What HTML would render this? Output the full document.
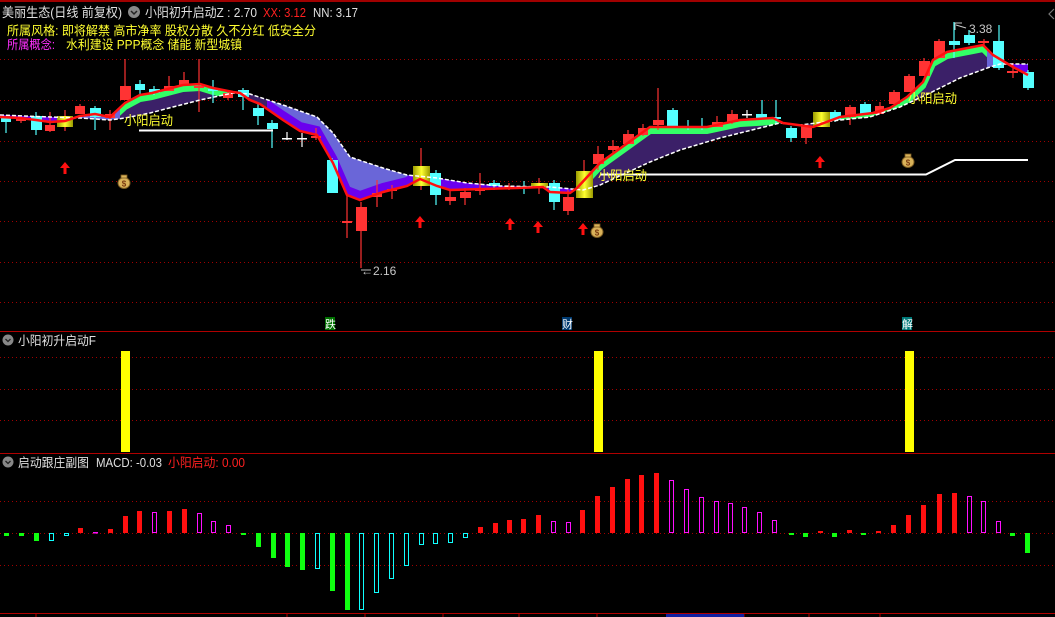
<!DOCTYPE html>
<html><head><meta charset="utf-8"><style>
html,body{margin:0;padding:0;background:#000;width:1055px;height:617px;overflow:hidden}
svg{display:block}
text{font-family:"Liberation Sans","Noto Sans CJK SC",sans-serif}
</style></head><body>
<svg width="1055" height="617" viewBox="0 0 1055 617" xmlns="http://www.w3.org/2000/svg">
<defs>
<clipPath id="rise"><rect x="120" y="0" width="147" height="330"/><rect x="575" y="0" width="412" height="330"/></clipPath>
<clipPath id="fall"><rect x="0" y="0" width="120" height="330"/><rect x="267" y="0" width="308" height="330"/><rect x="987" y="0" width="68" height="330"/></clipPath>
<clipPath id="band"><polygon id="bandp" points="0,117 20,118 36,120 50,122 65,121 80,116 95,114 110,117 125,103 140,95 152,93 183,85 200,84 213,88 233,92 240,93 250,100 260,104 283,120 300,131 317,135 333,163 347,195 360,200 383,192 407,186 420,179 437,186 450,190 483,189 517,188 543,187 550,192 570,193 577,188 600,163 650,127 660,127 707,127 740,120 773,118 783,123 813,127 840,117 873,113 890,108 907,97 923,82 933,60 947,52 973,47 983,45 993,55 1013,67 1028,75 1028,64 1000,64 990,67 960,78 930,93 900,107 870,117 840,120 800,125 780,123 760,128 720,138 680,150 650,162 600,185 583,190 550,187 500,186 467,183 437,178 407,175 383,168 350,157 333,133 317,117 283,105 250,94 233,93 200,100 150,113 125,118 110,120 80,118 50,117 0,115"/></clipPath>
<linearGradient id="yg" x1="0" x2="1" y1="0" y2="0"><stop offset="0" stop-color="#9a9a00"/><stop offset="0.5" stop-color="#ffff30"/><stop offset="1" stop-color="#9a9a00"/></linearGradient>
<g id="arrow"><polygon points="0,-6 -5,0 -1.5,0 -1.5,6 1.5,6 1.5,0 5,0" fill="#ff1010"/></g>
<g id="bag"><ellipse cx="0" cy="2" rx="6" ry="5.5" fill="#d9b25a" stroke="#7a5a20" stroke-width="1"/><rect x="-3" y="-6" width="6" height="3" fill="#d9b25a" stroke="#7a5a20" stroke-width="0.8"/><text x="0" y="5.5" font-size="8" fill="#7a3a10" text-anchor="middle" font-weight="bold">$</text></g>
</defs>

<line x1="0" y1="1" x2="1055" y2="1" stroke="#a00000" stroke-width="2"/>
<g stroke="#a00000" stroke-width="1" stroke-dasharray="1,3">
<line x1="0" y1="59.5" x2="1055" y2="59.5"/><line x1="0" y1="100.5" x2="1055" y2="100.5"/><line x1="0" y1="141.5" x2="1055" y2="141.5"/><line x1="0" y1="181.5" x2="1055" y2="181.5"/><line x1="0" y1="221.5" x2="1055" y2="221.5"/><line x1="0" y1="262.5" x2="1055" y2="262.5"/><line x1="0" y1="302.5" x2="1055" y2="302.5"/>
<line x1="0" y1="357.5" x2="1055" y2="357.5"/><line x1="0" y1="389.5" x2="1055" y2="389.5"/><line x1="0" y1="420.5" x2="1055" y2="420.5"/>
<line x1="0" y1="501.5" x2="1055" y2="501.5"/><line x1="0" y1="533.5" x2="1055" y2="533.5"/><line x1="0" y1="565.5" x2="1055" y2="565.5"/>
</g>
<line x1="0" y1="331.5" x2="1055" y2="331.5" stroke="#b00000"/>
<line x1="0" y1="453.5" x2="1055" y2="453.5" stroke="#b00000"/>
<line x1="0" y1="613.5" x2="1055" y2="613.5" stroke="#b00000"/>
<g stroke="#b00000"><line x1="36" y1="613" x2="36" y2="617"/><line x1="287" y1="613" x2="287" y2="617"/><line x1="365" y1="613" x2="365" y2="617"/><line x1="443" y1="613" x2="443" y2="617"/><line x1="519" y1="613" x2="519" y2="617"/><line x1="597" y1="613" x2="597" y2="617"/><line x1="744" y1="613" x2="744" y2="617"/><line x1="809" y1="613" x2="809" y2="617"/><line x1="880" y1="613" x2="880" y2="617"/></g>
<rect x="666" y="614" width="78" height="3" fill="#1020a0"/>

<g clip-path="url(#rise)"><use href="#bandp" fill="#3b2068"/></g>
<g clip-path="url(#fall)"><use href="#bandp" fill="#6a66d8"/></g>
<g clip-path="url(#band)">
 <g clip-path="url(#rise)"><polyline transform="translate(0,4)" fill="none" stroke="#33ff66" stroke-width="6" points="0,117 20,118 36,120 50,122 65,121 80,116 95,114 110,117 125,103 140,95 152,93 183,85 200,84 213,88 233,92 240,93 250,100 260,104 283,120 300,131 317,135 333,163 347,195 360,200 383,192 407,186 420,179 437,186 450,190 483,189 517,188 543,187 550,192 570,193 577,188 600,163 650,127 660,127 707,127 740,120 773,118 783,123 813,127 840,117 873,113 890,108 907,97 923,82 933,60 947,52 973,47 983,45 993,55 1013,67 1028,75"/></g>
 <g clip-path="url(#fall)"><polyline transform="translate(0,-5)" fill="none" stroke="#6a00ee" stroke-width="8" points="0,117 20,118 36,120 50,122 65,121 80,116 95,114 110,117 125,103 140,95 152,93 183,85 200,84 213,88 233,92 240,93 250,100 260,104 283,120 300,131 317,135 333,163 347,195 360,200 383,192 407,186 420,179 437,186 450,190 483,189 517,188 543,187 550,192 570,193 577,188 600,163 650,127 660,127 707,127 740,120 773,118 783,123 813,127 840,117 873,113 890,108 907,97 923,82 933,60 947,52 973,47 983,45 993,55 1013,67 1028,75"/></g>
</g>

<g id="candles">
<g stroke-width="1.2">
<line x1="6" y1="116" x2="6" y2="133" stroke="#54ffff"/><line x1="21" y1="117" x2="21" y2="123" stroke="#ff3333"/><line x1="36" y1="112" x2="36" y2="135" stroke="#54ffff"/><line x1="50" y1="112" x2="50" y2="132" stroke="#ff3333"/><line x1="65" y1="110" x2="65" y2="131" stroke="#ff3333"/><line x1="80" y1="104" x2="80" y2="114" stroke="#ff3333"/><line x1="95" y1="106" x2="95" y2="130" stroke="#54ffff"/><line x1="110" y1="110" x2="110" y2="130" stroke="#ff3333"/><line x1="125" y1="59" x2="125" y2="100" stroke="#ff3333"/><line x1="140" y1="80" x2="140" y2="95" stroke="#54ffff"/><line x1="154" y1="86" x2="154" y2="95" stroke="#54ffff"/><line x1="169" y1="76" x2="169" y2="91" stroke="#ff3333"/><line x1="184" y1="72" x2="184" y2="85" stroke="#ff3333"/><line x1="199" y1="59" x2="199" y2="112" stroke="#ff3333"/><line x1="213" y1="80" x2="213" y2="103" stroke="#54ffff"/><line x1="228" y1="90" x2="228" y2="100" stroke="#ff3333"/><line x1="243" y1="88" x2="243" y2="110" stroke="#54ffff"/><line x1="258" y1="104" x2="258" y2="125" stroke="#54ffff"/><line x1="272" y1="120" x2="272" y2="148" stroke="#54ffff"/><line x1="287" y1="132" x2="287" y2="140" stroke="#fff"/><line x1="302" y1="133" x2="302" y2="147" stroke="#fff"/><line x1="316" y1="128" x2="316" y2="140" stroke="#ff3333"/><line x1="332" y1="158" x2="332" y2="193" stroke="#54ffff"/><line x1="347" y1="195" x2="347" y2="238" stroke="#ff3333"/><line x1="361" y1="202" x2="361" y2="268" stroke="#ff3333"/><line x1="377" y1="180" x2="377" y2="207" stroke="#ff3333"/><line x1="392" y1="185" x2="392" y2="199" stroke="#ff3333"/><line x1="421" y1="148" x2="421" y2="190" stroke="#ff3333"/><line x1="436" y1="170" x2="436" y2="205" stroke="#54ffff"/><line x1="450" y1="190" x2="450" y2="205" stroke="#ff3333"/><line x1="465" y1="188" x2="465" y2="205" stroke="#ff3333"/><line x1="480" y1="173" x2="480" y2="195" stroke="#ff3333"/><line x1="494" y1="180" x2="494" y2="190" stroke="#54ffff"/><line x1="509" y1="183" x2="509" y2="190" stroke="#ff3333"/><line x1="524" y1="181" x2="524" y2="194" stroke="#54ffff"/><line x1="539" y1="178" x2="539" y2="194" stroke="#ff3333"/><line x1="554" y1="180" x2="554" y2="210" stroke="#54ffff"/><line x1="568" y1="190" x2="568" y2="215" stroke="#ff3333"/><line x1="584" y1="160" x2="584" y2="198" stroke="#ff3333"/><line x1="598" y1="146" x2="598" y2="170" stroke="#ff3333"/><line x1="613" y1="140" x2="613" y2="154" stroke="#ff3333"/><line x1="628" y1="130" x2="628" y2="144" stroke="#ff3333"/><line x1="643" y1="124" x2="643" y2="136" stroke="#ff3333"/><line x1="658" y1="88" x2="658" y2="130" stroke="#ff3333"/><line x1="673" y1="108" x2="673" y2="127" stroke="#54ffff"/><line x1="688" y1="120" x2="688" y2="130" stroke="#54ffff"/><line x1="702" y1="118" x2="702" y2="130" stroke="#54ffff"/><line x1="717" y1="116" x2="717" y2="127" stroke="#ff3333"/><line x1="732" y1="110" x2="732" y2="124" stroke="#ff3333"/><line x1="747" y1="110" x2="747" y2="118" stroke="#fff"/><line x1="762" y1="100" x2="762" y2="120" stroke="#54ffff"/><line x1="776" y1="100" x2="776" y2="124" stroke="#54ffff"/><line x1="791" y1="126" x2="791" y2="142" stroke="#54ffff"/><line x1="806" y1="124" x2="806" y2="144" stroke="#ff3333"/><line x1="835" y1="110" x2="835" y2="122" stroke="#54ffff"/><line x1="850" y1="105" x2="850" y2="125" stroke="#ff3333"/><line x1="865" y1="102" x2="865" y2="115" stroke="#54ffff"/><line x1="880" y1="102" x2="880" y2="114" stroke="#ff3333"/><line x1="894" y1="90" x2="894" y2="104" stroke="#ff3333"/><line x1="909" y1="74" x2="909" y2="92" stroke="#ff3333"/><line x1="924" y1="58" x2="924" y2="76" stroke="#ff3333"/><line x1="939" y1="39" x2="939" y2="58" stroke="#ff3333"/><line x1="954" y1="22" x2="954" y2="58" stroke="#54ffff"/><line x1="969" y1="30" x2="969" y2="45" stroke="#54ffff"/><line x1="984" y1="39" x2="984" y2="46" stroke="#ff3333"/><line x1="999" y1="25" x2="999" y2="70" stroke="#54ffff"/><line x1="1013" y1="63" x2="1013" y2="78" stroke="#ff3333"/><line x1="1028" y1="70" x2="1028" y2="90" stroke="#54ffff"/>
</g>
<g fill="#ff3333">
<rect x="16" y="119" width="10" height="2"/><rect x="45" y="125" width="10" height="6"/><rect x="75" y="106" width="10" height="8"/><rect x="105" y="114" width="10" height="4"/><rect x="120" y="86" width="11" height="14"/><rect x="164" y="86" width="10" height="5"/><rect x="179" y="80" width="10" height="5"/><rect x="194" y="86" width="10" height="2"/><rect x="223" y="93" width="10" height="5"/><rect x="311" y="136" width="10" height="2"/><rect x="342" y="221" width="10" height="2"/><rect x="356" y="207" width="11" height="24"/><rect x="372" y="193" width="10" height="4"/><rect x="387" y="189" width="10" height="2"/><rect x="445" y="197" width="11" height="4"/><rect x="460" y="192" width="11" height="6"/><rect x="475" y="189" width="10" height="2"/><rect x="504" y="186" width="10" height="1.5"/><rect x="563" y="197" width="11" height="14"/><rect x="593" y="154" width="11" height="10"/><rect x="608" y="146" width="11" height="4"/><rect x="623" y="134" width="11" height="10"/><rect x="638" y="128" width="10" height="7"/><rect x="653" y="120" width="11" height="5"/><rect x="712" y="122" width="11" height="5"/><rect x="727" y="114" width="11" height="8"/><rect x="801" y="126" width="11" height="12"/><rect x="845" y="107" width="11" height="10"/><rect x="875" y="106" width="9" height="8"/><rect x="889" y="92" width="11" height="12"/><rect x="904" y="76" width="11" height="16"/><rect x="919" y="61" width="11" height="15"/><rect x="934" y="41" width="11" height="17"/><rect x="978" y="41" width="11" height="2"/><rect x="1007" y="71" width="11" height="2"/>
</g>
<g fill="#54ffff">
<rect x="1" y="118" width="10" height="4"/><rect x="31" y="116" width="11" height="14"/><rect x="90" y="108" width="11" height="9"/><rect x="135" y="84" width="10" height="6"/><rect x="149" y="89" width="11" height="4"/><rect x="208" y="89" width="10" height="2"/><rect x="238" y="90" width="11" height="7"/><rect x="253" y="108" width="11" height="8"/><rect x="267" y="123" width="11" height="6"/><rect x="327" y="160" width="11" height="33"/><rect x="430" y="173" width="11" height="22"/><rect x="489" y="183" width="11" height="3"/><rect x="519" y="186" width="11" height="2"/><rect x="549" y="183" width="11" height="19"/><rect x="667" y="110" width="11" height="17"/><rect x="683" y="126" width="10" height="2"/><rect x="697" y="126" width="10" height="2"/><rect x="756" y="114" width="11" height="4"/><rect x="771" y="117" width="10" height="2"/><rect x="786" y="128" width="11" height="10"/><rect x="830" y="112" width="11" height="8"/><rect x="860" y="104" width="11" height="10"/><rect x="949" y="41" width="11" height="4"/><rect x="964" y="35" width="11" height="8"/><rect x="993" y="41" width="11" height="27"/><rect x="1023" y="72" width="11" height="16"/>
</g>
<g fill="#fff"><rect x="282" y="138" width="10" height="1.5"/><rect x="297" y="138" width="10" height="1.5"/><rect x="742" y="114" width="10" height="1.5"/></g>
<g fill="url(#yg)"><rect x="57" y="116" width="16" height="11"/><rect x="413" y="166" width="17" height="20"/><rect x="531" y="183" width="17" height="5"/><rect x="576" y="171" width="17" height="27"/><rect x="813" y="112" width="17" height="15"/></g>
</g>

<polyline fill="none" stroke="#fff" stroke-width="1.5" stroke-dasharray="4,2" points="0,115 50,117 80,118 110,120 125,118 150,113 200,100 233,93 250,94 283,105 317,117 333,133 350,157 383,168 407,175 437,178 467,183 500,186 550,187 583,190 600,185 650,162 680,150 720,138 760,128 780,123 800,125 840,120 870,117 900,107 930,93 960,78 990,67 1000,64 1028,64"/>
<polyline fill="none" stroke="#ff1010" stroke-width="2.5" points="0,117 20,118 36,120 50,122 65,121 80,116 95,114 110,117 125,103 140,95 152,93 183,85 200,84 213,88 233,92 240,93 250,100 260,104 283,120 300,131 317,135 333,163 347,195 360,200 383,192 407,186 420,179 437,186 450,190 483,189 517,188 543,187 550,192 570,193 577,188 600,163 650,127 660,127 707,127 740,120 773,118 783,123 813,127 840,117 873,113 890,108 907,97 923,82 933,60 947,52 973,47 983,45 993,55 1013,67 1028,75"/>

<line x1="139" y1="130.5" x2="273" y2="130.5" stroke="#fff" stroke-width="2"/>
<polyline fill="none" stroke="#fff" stroke-width="2" points="600,174.5 926,174.5 955,160 1028,160"/>

<use href="#arrow" x="65" y="168"/><use href="#arrow" x="420" y="222"/><use href="#arrow" x="510" y="224"/><use href="#arrow" x="538" y="227"/><use href="#arrow" x="583" y="229"/><use href="#arrow" x="820" y="162"/>
<use href="#bag" x="124" y="181"/><use href="#bag" x="597" y="230"/><use href="#bag" x="908" y="160"/>

<g font-size="13" fill="#ffff30">
<text x="124" y="125" textLength="49" lengthAdjust="spacingAndGlyphs">小阳启动</text><text x="598" y="180" textLength="49" lengthAdjust="spacingAndGlyphs">小阳启动</text><text x="908" y="103" textLength="49" lengthAdjust="spacingAndGlyphs">小阳启动</text>
</g>
<line x1="361" y1="270" x2="371" y2="270" stroke="#bbb"/><text x="361" y="275" font-size="12" fill="#c8c8c8">←2.16</text>
<polyline fill="none" stroke="#c8c8c8" points="955,30 955,23 962,23"/><line x1="956" y1="25" x2="966" y2="28" stroke="#c8c8c8"/><text x="969" y="33" font-size="12" fill="#c8c8c8">3.38</text>
<polyline fill="none" stroke="#777" stroke-width="1.2" points="1054,9 1049,14 1054,19"/>

<text x="2" y="17" font-size="13" fill="#e0e0e0" textLength="120" lengthAdjust="spacingAndGlyphs">美丽生态(日线 前复权)</text>
<circle cx="134" cy="12" r="6" fill="#888"/><polyline points="131,11 134,14 137,11" fill="none" stroke="#222" stroke-width="1.5"/>
<text x="145" y="17" font-size="13" fill="#e0e0e0" textLength="112" lengthAdjust="spacingAndGlyphs">小阳初升启动Z : 2.70</text>
<text x="263" y="17" font-size="13" fill="#ff2020" textLength="43" lengthAdjust="spacingAndGlyphs">XX: 3.12</text>
<text x="313" y="17" font-size="13" fill="#e0e0e0" textLength="45" lengthAdjust="spacingAndGlyphs">NN: 3.17</text>
<text x="7" y="35" font-size="12.5" fill="#ffff30" textLength="309" lengthAdjust="spacingAndGlyphs">所属风格:  即将解禁 高市净率 股权分散 久不分红 低安全分</text>
<text x="7" y="49" font-size="12.5" fill="#ff30ff" textLength="48" lengthAdjust="spacingAndGlyphs">所属概念:</text>
<text x="66" y="49" font-size="12.5" fill="#ffff30" textLength="176" lengthAdjust="spacingAndGlyphs">水利建设 PPP概念 储能 新型城镇</text>

<rect x="325" y="317" width="10" height="13" fill="#007000"/><text x="325" y="328" font-size="11" fill="#fff">跌</text>
<rect x="562" y="317" width="10" height="13" fill="#003a70"/><text x="562" y="328" font-size="11" fill="#fff">财</text>
<rect x="902" y="317" width="10" height="13" fill="#007878"/><text x="902" y="328" font-size="11" fill="#fff">解</text>

<circle cx="8" cy="340" r="5.5" fill="#888"/><polyline points="5.5,339 8,341.5 10.5,339" fill="none" stroke="#222" stroke-width="1.3"/>
<text x="18" y="345" font-size="12.5" fill="#e0e0e0" textLength="78" lengthAdjust="spacingAndGlyphs">小阳初升启动F</text>
<g fill="#ffff00"><rect x="121" y="351" width="9" height="101"/><rect x="594" y="351" width="9" height="101"/><rect x="905" y="351" width="9" height="101"/></g>

<circle cx="8" cy="462" r="5.5" fill="#888"/><polyline points="5.5,461 8,463.5 10.5,461" fill="none" stroke="#222" stroke-width="1.3"/>
<text x="18" y="467" font-size="12.5" fill="#e0e0e0" textLength="71" lengthAdjust="spacingAndGlyphs">启动跟庄副图</text>
<text x="96" y="467" font-size="12.5" fill="#e0e0e0" textLength="66" lengthAdjust="spacingAndGlyphs">MACD: -0.03</text>
<text x="168" y="467" font-size="12.5" fill="#ff2020" textLength="77" lengthAdjust="spacingAndGlyphs">小阳启动: 0.00</text>

<g>
<g fill="#10ff10"><rect x="4" y="533" width="5" height="3"/><rect x="19" y="533" width="5" height="3"/><rect x="34" y="533" width="5" height="8"/><rect x="241" y="533" width="5" height="2"/><rect x="256" y="533" width="5" height="14"/><rect x="271" y="533" width="5" height="25"/><rect x="285" y="533" width="5" height="34"/><rect x="300" y="533" width="5" height="37"/><rect x="330" y="533" width="5" height="58"/><rect x="345" y="533" width="5" height="77"/><rect x="789" y="533" width="5" height="2"/><rect x="803" y="533" width="5" height="4"/><rect x="832" y="533" width="5" height="4"/><rect x="861" y="533" width="5" height="2"/><rect x="1010" y="533" width="5" height="3"/><rect x="1025" y="533" width="5" height="20"/></g>
<g fill="none" stroke="#10ffff" stroke-width="1"><rect x="49.5" y="533.5" width="4" height="7"/><rect x="64.5" y="533.5" width="4" height="2"/><rect x="315.5" y="533.5" width="4" height="35"/><rect x="359.5" y="533.5" width="4" height="76"/><rect x="374.5" y="533.5" width="4" height="59"/><rect x="389.5" y="533.5" width="4" height="45"/><rect x="404.5" y="533.5" width="4" height="32"/><rect x="419.5" y="533.5" width="4" height="11"/><rect x="433.5" y="533.5" width="4" height="10"/><rect x="448.5" y="533.5" width="4" height="9"/><rect x="463.5" y="533.5" width="4" height="4"/></g>
<g fill="#ff1010"><rect x="78" y="528" width="5" height="5"/><rect x="108" y="529" width="5" height="4"/><rect x="123" y="516" width="5" height="17"/><rect x="137" y="511" width="5" height="22"/><rect x="167" y="511" width="5" height="22"/><rect x="182" y="509" width="5" height="24"/><rect x="478" y="527" width="5" height="6"/><rect x="493" y="523" width="5" height="10"/><rect x="507" y="520" width="5" height="13"/><rect x="521" y="519" width="5" height="14"/><rect x="536" y="515" width="5" height="18"/><rect x="580" y="510" width="5" height="23"/><rect x="595" y="496" width="5" height="37"/><rect x="610" y="487" width="5" height="46"/><rect x="625" y="479" width="5" height="54"/><rect x="639" y="475" width="5" height="58"/><rect x="654" y="473" width="5" height="60"/><rect x="818" y="531" width="5" height="2"/><rect x="847" y="530" width="5" height="3"/><rect x="876" y="531" width="5" height="2"/><rect x="891" y="525" width="5" height="8"/><rect x="906" y="515" width="5" height="18"/><rect x="921" y="505" width="5" height="28"/><rect x="937" y="494" width="5" height="39"/><rect x="952" y="493" width="5" height="40"/></g>
<rect x="93" y="532" width="5" height="1.5" fill="#ff10ff"/>
<g fill="none" stroke="#ff10ff" stroke-width="1"><rect x="152.5" y="512.5" width="4" height="20"/><rect x="197.5" y="513.5" width="4" height="19"/><rect x="211.5" y="521.5" width="4" height="11"/><rect x="226.5" y="525.5" width="4" height="7"/><rect x="551.5" y="521.5" width="4" height="11"/><rect x="566.5" y="522.5" width="4" height="10"/><rect x="669.5" y="480.5" width="4" height="52"/><rect x="684.5" y="489.5" width="4" height="43"/><rect x="699.5" y="497.5" width="4" height="35"/><rect x="714.5" y="501.5" width="4" height="31"/><rect x="728.5" y="503.5" width="4" height="29"/><rect x="742.5" y="507.5" width="4" height="25"/><rect x="757.5" y="512.5" width="4" height="20"/><rect x="772.5" y="520.5" width="4" height="12"/><rect x="967.5" y="496.5" width="4" height="36"/><rect x="981.5" y="501.5" width="4" height="31"/><rect x="996.5" y="521.5" width="4" height="11"/></g>
</g>
</svg>
</body></html>
